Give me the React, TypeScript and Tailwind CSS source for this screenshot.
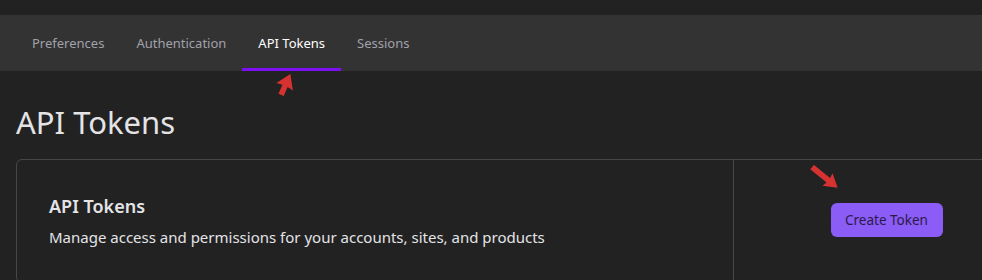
import React from 'react'

const tabs = ['Preferences', 'Authentication', 'API Tokens', 'Sessions']

// red annotation arrow, drawn pointing right from its tail, then rotated
function Arrow({ className, length, head = 8 }: { className?: string; length: number; head?: number }) {
  const L = length
  const h = head + 5
  return (
    <svg width={L} height={head * 2 + 2} viewBox={`0 ${-head - 1} ${L} ${head * 2 + 2}`} className={className} fill="#d63232">
      <polygon points={`0,-2.8 ${L - h + 1},-2.8 ${L - h},${-head} ${L},0 ${L - h},${head} ${L - h + 1},2.8 0,2.8`} />
    </svg>
  )
}

export default function App() {
  const active = 'API Tokens'
  return (
    <div className="relative h-[280px] w-[982px] overflow-hidden bg-[#222222] text-[#e4e4e7]" style={{ fontFamily: '"Noto Sans", "Open Sans", sans-serif' }}>
      <div className="h-[15px] bg-[#222222]" />

      <nav className="flex h-[56px] items-stretch bg-[#333333] pl-4">
        {tabs.map(t => (
          <div
            key={t}
            className={
              t === active
                ? 'flex items-center border-b-[3px] border-[#7c10f2] px-4 pt-[5px] text-[13px] text-white'
                : 'flex items-center border-b-[3px] border-transparent px-4 pt-[5px] text-[13px] text-[#a1a1aa]'
            }
          >
            {t}
          </div>
        ))}
      </nav>

      <h1 className="mt-[32px] pl-4 text-[31px] leading-[38px] text-[#e4e4e7]">API Tokens</h1>

      <div className="ml-4 mt-[18px] flex h-[124px] w-[1024px] rounded-md border border-[#474747]">
        <div className="flex w-[716px] flex-col justify-center px-8">
          <h2 className="text-[18px] font-semibold leading-6">API Tokens</h2>
          <p className="mt-[7px] text-[15px] leading-6 text-[#e4e4e7]">
            Manage access and permissions for your accounts, sites, and products
          </p>
        </div>
        <div className="flex flex-1 items-center justify-center border-l border-[#474747]">
          <button className="mt-[-2px] h-[34px] w-[112px] rounded-md bg-[#8b5cf6] text-[13.5px] text-[#2a1a4a]">
            Create Token
          </button>
        </div>
      </div>

      <Arrow length={23} head={9} className="absolute left-[281px] top-[85px] origin-left rotate-[-66deg]" />
      <Arrow length={33} head={8} className="absolute left-[812px] top-[158px] origin-left rotate-[39deg]" />
    </div>
  )
}
